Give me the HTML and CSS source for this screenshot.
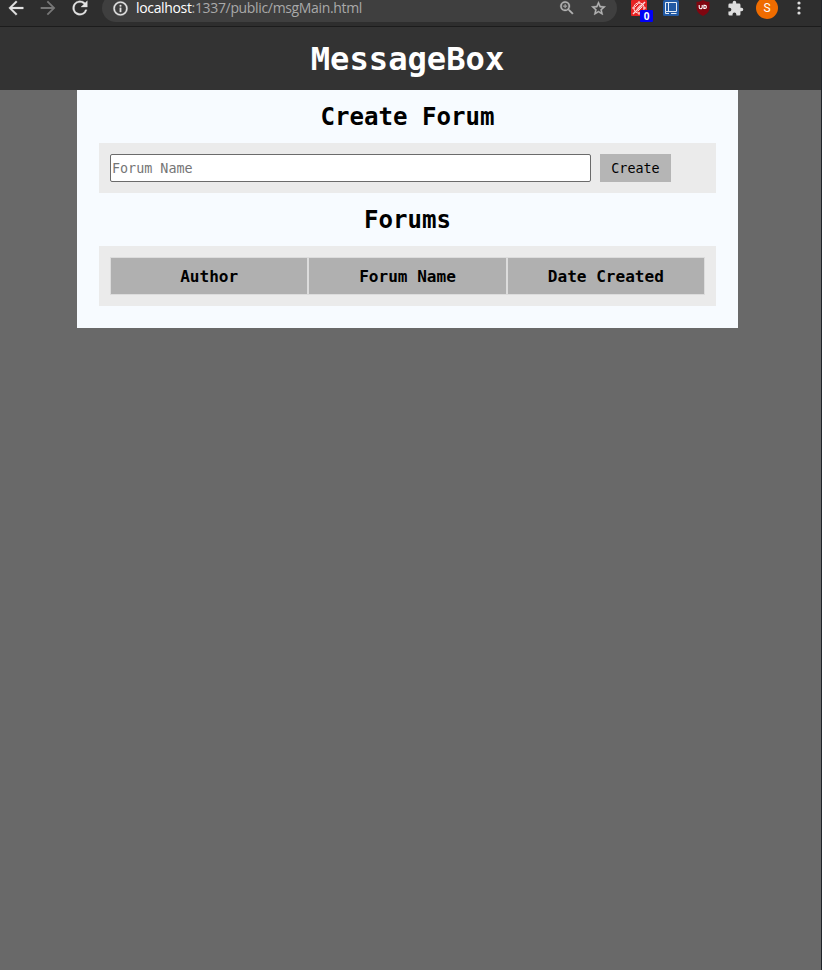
FILE: index.html
```html
<!DOCTYPE html>
<html lang="en">
<head>
<meta charset="utf-8">
<title>MessageBox</title>
<link rel="stylesheet" href="styles.css">
</head>
<body>
<div class="window">
  <div class="toolbar">
    <div class="toolbar-row">
      <span class="slot"><svg width="22" height="22" viewBox="0 0 24 24" fill="#e3e3e3" stroke="#e3e3e3" stroke-width=".3"><path d="M20 11H7.830l5.590-5.590L12 4l-8 8 8 8 1.410-1.410L7.830 13H20z"/></svg></span>
      <span class="slot"><svg width="22" height="22" viewBox="0 0 24 24" fill="#777"><path d="M12 4l-1.410 1.410L16.170 11H4v2h12.170l-5.580 5.590L12 20l8-8z"/></svg></span>
      <span class="slot"><svg width="22" height="22" viewBox="0 0 24 24" fill="#e3e3e3" stroke="#e3e3e3" stroke-width=".3"><path d="M17.650 6.350A8 8 0 1 0 19.730 14h-2.080A6 6 0 1 1 12 6c1.660 0 3.140.690 4.220 1.780L13 11h7V4z"/></svg></span>
      <div class="address">
        <svg class="info" width="17" height="17" viewBox="0 0 24 24" fill="#e3e3e3"><path d="M11 17h2v-6h-2zm0-8h2V7h-2zm1-7a10 10 0 1 0 0 20 10 10 0 0 0 0-20zm0 18a8 8 0 1 1 0-16 8 8 0 0 1 0 16z" stroke="#e3e3e3" stroke-width=".5"/></svg>
        <span class="url"><b>localhost</b>:1337/public/msgMain.html</span>
        <span class="slot"><svg width="18" height="18" viewBox="0 0 24 24" fill="#b4b4b4"><path d="M15.500 14h-.790l-.280-.270A6.500 6.500 0 1 0 13.730 14.430l.270.280v.790l5 4.990L20.490 19zm-6 0a4.500 4.500 0 1 1 0-9 4.500 4.500 0 0 1 0 9zM12 10h-2v2H9v-2H7V9h2V7h1v2h2z" stroke="#b4b4b4" stroke-width=".4"/></svg></span>
        <span class="slot star"><svg width="17" height="17" viewBox="0 0 24 24" fill="#b4b4b4"><path d="M22 9.240l-7.190-.620L12 2 9.190 8.630 2 9.240l5.460 4.730L5.820 21 12 17.270 18.180 21l-1.630-7.030zM12 15.400l-3.760 2.270 1-4.280-3.320-2.880 4.380-.380L12 6.100l1.710 4.040 4.380.380-3.320 2.880 1 4.280z" stroke="#b4b4b4" stroke-width=".6"/></svg></span>
      </div>
      <span class="slot blocker">
        <svg width="16" height="16" viewBox="0 0 16 16"><rect width="16" height="16" rx="1" fill="#e62222"/><g fill="none" stroke="#ffdada"><circle cx="8" cy="8" r="5.200"/><path d="M2 14L14 2" stroke-width="1.500"/><path d="M4 7l3-3M6 8.500L10 4.500M6.500 11.500l5-5M8 1v3M8 12v3M1 8h3M12 8h3"/></g></svg>
        <span class="badge">0</span>
      </span>
      <span class="slot"><svg width="16" height="16" viewBox="0 0 16 16"><rect width="16" height="16" rx="1.500" fill="#2159a3"/><path d="M2.500 2.500h11v9h-11zM5.500 2.500v9M2.500 11.500v2H6M8 13.500h5.500" fill="none" stroke="#e4ecf5"/></svg></span>
      <span class="slot"><svg width="16" height="16" viewBox="0 0 16 16"><path d="M8 0c2 1.300 4 1.800 6.500 1.800v6c0 4-3 6.500-6.500 8.200-3.500-1.700-6.500-4.200-6.500-8.200v-6C4 1.800 6 1.300 8 0z" fill="#800610"/><path d="M4.200 5v2.200a1.500 1.500 0 0 0 3 0V5M8.900 5.400h1a1.500 1.500 0 0 1 0 3h-1z" fill="none" stroke="#fff" stroke-width="1.100"/></svg></span>
      <span class="slot"><svg width="17" height="17" viewBox="0 0 24 24" fill="#dedede"><path d="M20.500 11H19V7a2 2 0 0 0-2-2h-4V3.500a2.500 2.500 0 0 0-5 0V5H4a2 2 0 0 0-2 2v3.800h1.500a2.700 2.700 0 0 1 0 5.400H2V20a2 2 0 0 0 2 2h3.800v-1.500a2.700 2.700 0 0 1 5.400 0V22H17a2 2 0 0 0 2-2v-4h1.500a2.500 2.500 0 0 0 0-5z"/></svg></span>
      <span class="slot"><span class="avatar">S</span></span>
      <span class="slot"><svg width="4" height="14" viewBox="0 0 4 14" fill="#dedede"><circle cx="2" cy="2" r="1.600"/><circle cx="2" cy="7" r="1.600"/><circle cx="2" cy="12" r="1.600"/></svg></span>
    </div>
  </div>
  <header class="banner"><h1>MessageBox</h1></header>
  <main class="content">
    <h2>Create Forum</h2>
    <form class="panel create">
      <input type="text" placeholder="Forum Name">
      <button type="button">Create</button>
    </form>
    <h2>Forums</h2>
    <div class="panel list">
      <div class="forums">
        <div class="cell">Author</div>
        <div class="cell">Forum Name</div>
        <div class="cell">Date Created</div>
      </div>
    </div>
  </main>
</div>
</body>
</html>
```
FILE: styles.css
```css
* { box-sizing: border-box; }
body {
  margin: 0;
  background: #696969;
  font-family: Consolas, "DejaVu Sans Mono", monospace;
  color: #000;
}
.window {
  height: 970px;
  border-right: 1px solid #20242a;
  overflow: hidden;
}
.toolbar {
  height: 27px;
  background: #2e2e2e;
  border-bottom: 1px solid #1c1c1c;
}
.toolbar-row {
  display: flex;
  align-items: center;
  height: 22px;
}
.toolbar svg { display: block; flex: none; }
.slot {
  display: flex;
  flex: none;
  align-items: center;
  justify-content: center;
  width: 32px;
  height: 28px;
  margin-top: -6px;
}
.address {
  display: flex;
  align-items: center;
  width: 515px;
  height: 28px;
  margin: -6px 6px 0;
  padding: 0 2px 0 9.500px;
  border-radius: 14px;
  background: #3f3f3f;
}
.address .slot { margin-top: 0; }
.url {
  flex: 1;
  margin-left: 7.500px;
  font: 14px/16px "Open Sans", sans-serif;
  letter-spacing: -0.340px;
  color: #a9a9a9;
}
.url b { font-weight: 400; color: #fff; }
.star { padding-right: 1px; }
.blocker { position: relative; }
.badge {
  position: absolute;
  left: 17px;
  top: 16px;
  width: 13px;
  height: 12px;
  border-radius: 1px;
  background: #0000f5;
  color: #fff;
  font: bold 10px/12px "Open Sans", sans-serif;
  text-align: center;
}
.avatar {
  width: 22px;
  height: 22px;
  border-radius: 50%;
  background: #ef6c00;
  color: #fff;
  font: 12px/22px Roboto, sans-serif;
  text-align: center;
}
.banner {
  height: 63px;
  padding-right: 6px;
  background: #333;
  color: #fff;
  text-align: center;
}
h1 { margin: 0; font-size: 32.150px; line-height: 64px; }
.content {
  width: 661px;
  height: 238px;
  margin-left: 77px;
  padding: 0 22px;
  background: #f7fbff;
}
h2 {
  height: 53px;
  margin: 0;
  font-size: 24.100px;
  line-height: 55px;
  text-align: center;
}
.panel { padding: 11px; background: #ebebeb; }
.create { display: flex; gap: 9px; height: 50px; }
.list { height: 60px; }
.create input,
.create button { height: 28px; font: 13.400px "DejaVu Sans Mono", monospace; }
.create input {
  width: 481px;
  padding: 1px;
  border: 1px solid #6b6b6b;
  border-radius: 2px;
  background: #fff;
}
.create input::placeholder { color: #757575; }
.create button {
  width: 71px;
  padding: 0;
  border: 0;
  background: #b5b5b5;
  color: #000;
}
.forums {
  display: grid;
  grid-template-columns: repeat(3, 1fr);
  height: 38px;
}
.cell {
  height: 38px;
  border: 1px solid #dcdcdc;
  background: #b0b0b0;
  font-size: 16.070px;
  font-weight: 700;
  line-height: 37px;
  text-align: center;
}
```
